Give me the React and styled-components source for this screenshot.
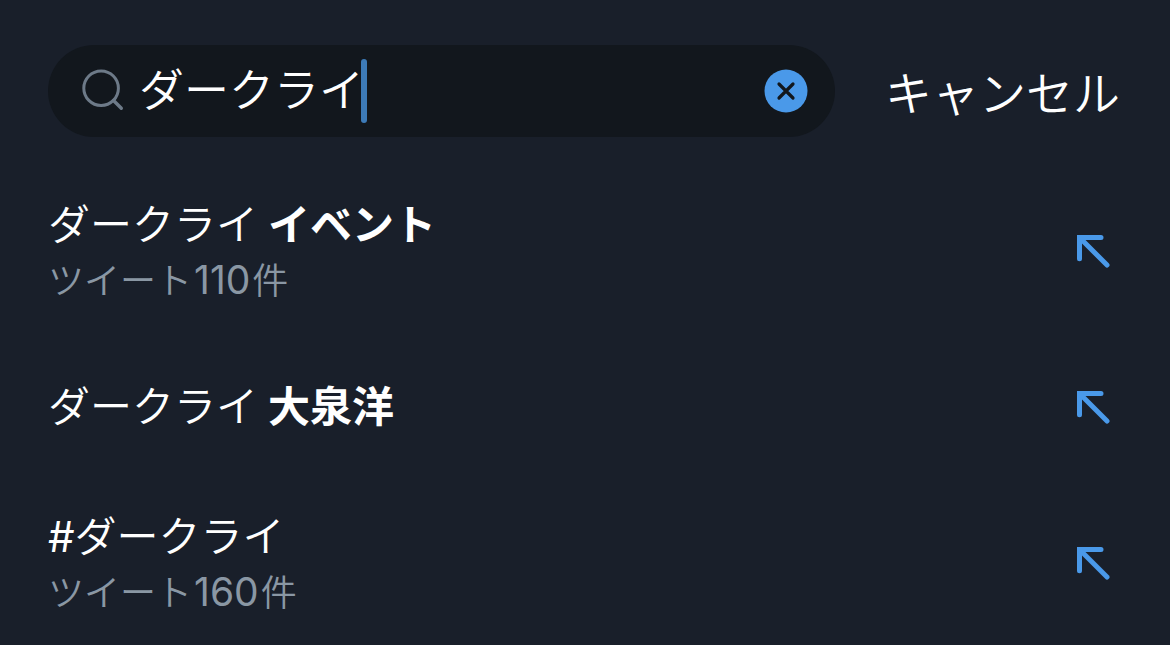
import React, { useState } from "react";
import styled, { createGlobalStyle, ThemeProvider } from "styled-components";

const theme = {
    bg: "#191F2A",
    field: "#12171D",
    text: "#FFFFFF",
    sub: "#8A97A4",
    icon: "#6D7A88",
    accent: "#4A99E9",
    caret: "#3D7BB8",
};

const GlobalStyle = createGlobalStyle`
    * {
        box-sizing: border-box;
    }
    body {
        margin: 0;
        background-color: ${theme.bg};
        font-family: Inter, "Noto Sans CJK JP", sans-serif;
    }
    button, input {
        font-family: inherit;
        font-weight: 350;
    }
`;

const Page = styled.main`
    min-height: 100vh;
    background-color: ${props => props.theme.bg};
    color: ${props => props.theme.text};
`;

const SearchHeader = styled.form`
    display: flex;
    align-items: center;
    gap: 50px;
    padding: 45px 50px 36px 48px;
`;

const SearchField = styled.div`
    flex: 1;
    min-width: 0;
    height: 92px;
    display: flex;
    align-items: center;
    padding: 0 27px 0 32px;
    border-radius: 46px;
    background-color: ${props => props.theme.field};
`;

const SearchLabel = styled.label`
    flex: 1;
    min-width: 0;
    display: flex;
    align-items: center;
    cursor: text;

    svg {
        flex: none;
        margin-right: 15px;
        color: ${props => props.theme.icon};
    }
`;

const SearchInput = styled.input`
    field-sizing: content;
    max-width: 100%;
    height: 64px;
    padding: 0;
    border: 0;
    outline: 0;
    background: none;
    color: inherit;
    caret-color: transparent;
    font-size: 45px;
    line-height: 64px;
`;

const Caret = styled.span`
    flex: none;
    width: 6px;
    height: 64px;
    margin-left: -3px;
    border-radius: 3px;
    background-color: ${props => props.theme.caret};
`;

const ClearButton = styled.button`
    flex: none;
    display: flex;
    padding: 0;
    border: 0;
    background: none;
    color: ${props => props.theme.accent};
    cursor: pointer;
`;

const CancelButton = styled.button`
    flex: none;
    padding: 6px 0 0;
    border: 0;
    background: none;
    color: inherit;
    font-size: 47px;
    line-height: 64px;
    cursor: pointer;
`;

const SuggestionList = styled.ul`
    margin: 0;
    padding: 0;
    list-style: none;
`;

const Suggestion = styled.button`
    width: 100%;
    height: 156px;
    display: flex;
    align-items: center;
    justify-content: space-between;
    padding: 0 60px 0 48px;
    border: 0;
    background: none;
    color: inherit;
    text-align: left;
    cursor: pointer;

    svg {
        flex: none;
        color: ${props => props.theme.accent};
    }
`;

const SuggestionTitle = styled.div`
    font-size: 42px;
    line-height: 60px;

    b {
        font-weight: 700;
    }
`;

const TweetCount = styled.div`
    color: ${props => props.theme.sub};
    font-size: 36px;
    line-height: 52px;
`;

// latin glyphs are a step heavier than the kana, in the text optical size
const Latin = styled.span`
    font-weight: 400;
    font-variation-settings: "opsz" 14;
`;

const Digits = styled(Latin)`
    padding: 0 2px;
    font-size: 39px;
    line-height: 1;
`;

const SearchIcon = () => (
    <svg width="44" height="44" viewBox="0 0 44 44" fill="none" stroke="currentColor" strokeWidth="3" strokeLinecap="round" aria-hidden="true">
        <circle cx="21.1" cy="19.2" r="17.3" />
        <path d="M33.5 31.5L41.3 39.3" strokeWidth="3.4" />
    </svg>
);

const ClearIcon = () => (
    <svg width="44" height="44" viewBox="0 0 44 44" fill="none" aria-hidden="true">
        <circle cx="22" cy="22" r="21.5" fill="currentColor" />
        <path d="M15 15L29 29M29 15L15 29" stroke={theme.field} strokeWidth="3.2" strokeLinecap="round" />
    </svg>
);

const FillArrow = () => (
    <svg width="34" height="34" viewBox="0 0 34 34" fill="none" stroke="currentColor" strokeWidth="5" strokeLinecap="round" aria-hidden="true">
        <path d="M3.5 24.8V3.5H25" />
        <path d="M4.5 4.5L31 31" />
    </svg>
);

const suggestions = [
    { text: "ダークライ", bold: "イベント", count: 110 },
    { text: "ダークライ", bold: "大泉洋" },
    { text: "ダークライ", hashtag: true, count: 160 },
];

export default function App() {
    const [query, setQuery] = useState("ダークライ");

    const pick = item => {
        setQuery((item.hashtag ? "#" : "") + item.text + (item.bold ? ` ${item.bold}` : ""));
    };

    return (
        <ThemeProvider theme={theme}>
            <GlobalStyle />
            <Page lang="ja">
                <SearchHeader onSubmit={e => e.preventDefault()}>
                    <SearchField>
                        <SearchLabel htmlFor="query">
                            <SearchIcon />
                            <SearchInput
                                id="query"
                                aria-label="検索"
                                autoComplete="off"
                                value={query}
                                onChange={e => setQuery(e.target.value)}
                            />
                            <Caret />
                        </SearchLabel>
                        <ClearButton type="button" aria-label="クリア" onClick={() => setQuery("")}>
                            <ClearIcon />
                        </ClearButton>
                    </SearchField>
                    <CancelButton type="button">キャンセル</CancelButton>
                </SearchHeader>

                <SuggestionList>
                    {suggestions.map((item, i) => (
                        <li key={i}>
                            <Suggestion type="button" onClick={() => pick(item)}>
                                <div>
                                    <SuggestionTitle>
                                        {item.hashtag && <Latin>#</Latin>}
                                        {item.text}
                                        {item.bold && <b> {item.bold}</b>}
                                    </SuggestionTitle>
                                    {item.count && <TweetCount>ツイート<Digits>{item.count}</Digits>件</TweetCount>}
                                </div>
                                <FillArrow />
                            </Suggestion>
                        </li>
                    ))}
                </SuggestionList>
            </Page>
        </ThemeProvider>
    );
}
